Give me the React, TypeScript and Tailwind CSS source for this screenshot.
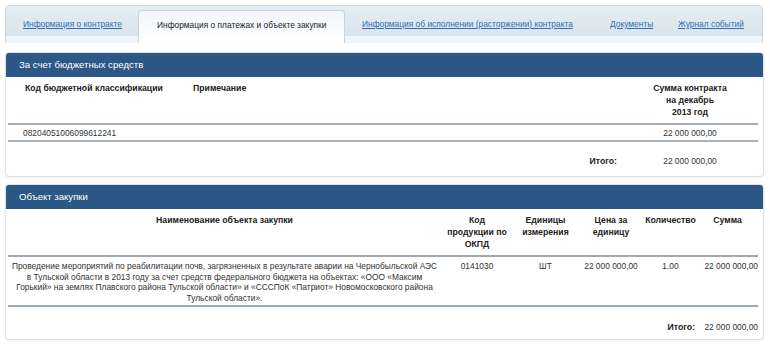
export default function App() {
  const t2 = "grid grid-cols-[433px_72px_65px_66px_53px_61px]";
  const t1 = "grid grid-cols-[170px_444px_136px]";
  return (
    <div className="w-[770px] h-[348px] bg-white font-['Liberation_Sans',Arial,sans-serif] text-[8.4px] leading-[12px] text-[#333] overflow-hidden">
      <div className="pt-[5px] pl-[5px]">
        <div className="w-[758px] h-[38px] flex rounded-t-[5px] border border-b-0 border-[#c8d3dd] bg-gradient-to-b from-[#e6edf3] to-[#d8e2eb] overflow-hidden whitespace-nowrap">
          <div className="w-[132px] h-full pl-[17px] pt-[12px] border-b-[7px] border-[#eef5fb]">
            <a className="text-[#2f6eb0] underline">Информация о контракте</a>
          </div>
          <div className="w-[207px] mt-[4px] h-[34px] pl-[18px] pt-[8px] rounded-t-[4px] border-x border-t border-[#c8d3dd] bg-gradient-to-b from-[#f2f6fa] to-white text-[#222]">
            Информация о платежах и объекте закупки
          </div>
          <div className="w-[250px] h-full pl-[17px] pt-[12px] border-b-[7px] border-[#eef5fb]">
            <a className="text-[#2f6eb0] underline">Информация об исполнении (расторжении) контракта</a>
          </div>
          <div className="w-[70px] h-full pl-[15px] pt-[12px] border-b-[7px] border-[#eef5fb]">
            <a className="text-[#2f6eb0] underline">Документы</a>
          </div>
          <div className="flex-1 h-full pl-[13px] pt-[12px] border-b-[7px] border-[#eef5fb]">
            <a className="text-[#2f6eb0] underline">Журнал событий</a>
          </div>
        </div>

        <div className="mt-[9px] w-[759px] rounded-[4px] border border-[#dfe3e7] bg-white shadow-[0_1px_2px_rgba(0,0,0,0.05)]">
          <div className="h-[24px] bg-[#2b5886] rounded-t-[3px] pl-[13px] flex items-center text-white text-[9.6px]">
            За счет бюджетных средств
          </div>
          <div className="ml-[2px] mr-[5px]">
            <div className={`${t1} h-[48px] pt-[5px] border-b-2 border-[#a3adb7] font-bold text-[8.7px] text-[#222]`}>
              <div className="pl-[17px]">Код бюджетной классификации</div>
              <div className="pl-[15px]">Примечание</div>
              <div className="text-center">
                Сумма контракта
                <br />
                на декабрь
                <br />
                2013 год
              </div>
            </div>
            <div className={`${t1} h-[17px] items-center border-b-2 border-[#aab3bb]`}>
              <div className="pl-[15px]">08204051006099612241</div>
              <div />
              <div className="text-center">22 000 000,00</div>
            </div>
            <div className={`${t1} h-[34px] pt-[13px]`}>
              <div />
              <div className="text-right pr-[5px] font-bold text-[8.7px] text-[#222]">Итого:</div>
              <div className="text-center">22 000 000,00</div>
            </div>
          </div>
        </div>

        <div className="mt-[7px] w-[759px] rounded-[4px] border border-[#dfe3e7] bg-white shadow-[0_1px_2px_rgba(0,0,0,0.05)]">
          <div className="h-[24px] bg-[#2b5886] rounded-t-[3px] pl-[13px] flex items-center text-white text-[9.6px]">
            Объект закупки
          </div>
          <div className="ml-[2px] mr-[5px]">
            <div className={`${t2} h-[48px] pt-[5px] border-b-2 border-[#9eabb4] font-bold text-[8.7px] text-[#222] text-center`}>
              <div>Наименование объекта закупки</div>
              <div>
                Код
                <br />
                продукции по
                <br />
                ОКПД
              </div>
              <div>
                Единицы
                <br />
                измерения
              </div>
              <div>
                Цена за
                <br />
                единицу
              </div>
              <div>Количество</div>
              <div>Сумма</div>
            </div>
            <div className={`${t2} h-[50px] pt-[4px] border-b-2 border-[#9eabb4] text-center leading-[10.5px]`}>
              <div className="whitespace-nowrap">
                Проведение мероприятий по реабилитации почв, загрязненных в результате аварии на Чернобыльской АЭС
                <br />
                в Тульской области в 2013 году за счет средств федерального бюджета на объектах: «ООО «Максим
                <br />
                Горький» на землях Плавского района Тульской области» и «СССПоК «Патриот» Новомосковского района
                <br />
                Тульской области».
              </div>
              <div>0141030</div>
              <div>ШТ</div>
              <div>22 000 000,00</div>
              <div>1.00</div>
              <div className="text-right whitespace-nowrap">22 000 000,00</div>
            </div>
            <div className={`${t2} h-[32px] pt-[14px]`}>
              <div />
              <div />
              <div />
              <div />
              <div className="text-right pr-[2px] font-bold text-[8.7px] text-[#222] whitespace-nowrap">Итого:</div>
              <div className="text-right whitespace-nowrap">22 000 000,00</div>
            </div>
          </div>
        </div>
      </div>
    </div>
  );
}
